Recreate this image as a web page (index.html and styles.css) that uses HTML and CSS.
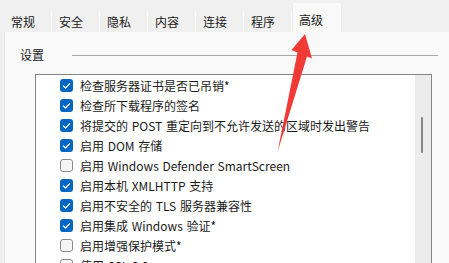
FILE: index.html
```html
<!DOCTYPE html>
<html lang="zh-CN">
<head>
<meta charset="utf-8">
<title>Internet 选项 - 高级</title>
<link rel="stylesheet" href="styles.css">
</head>
<body>
<div class="window">
  <div class="tabs">
    <div class="tab">常规</div>
    <div class="tab">安全</div>
    <div class="tab">隐私</div>
    <div class="tab">内容</div>
    <div class="tab">连接</div>
    <div class="tab">程序</div>
    <div class="tab selected">高级</div>
  </div>
  <div class="panel">
    <div class="group-head">
      <span class="group-label">设置</span>
      <span class="group-line"></span>
    </div>
    <div class="listbox">
      <ul class="items">
        <li class="item"><span class="cb on"><svg viewBox="0 0 13 13"><path d="M3.3 6.9 L5.5 9 L9.7 4.6"/></svg></span><span class="label">检查服务器证书是否已吊销*</span></li>
        <li class="item"><span class="cb on"><svg viewBox="0 0 13 13"><path d="M3.3 6.9 L5.5 9 L9.7 4.6"/></svg></span><span class="label">检查所下载程序的签名</span></li>
        <li class="item"><span class="cb on"><svg viewBox="0 0 13 13"><path d="M3.3 6.9 L5.5 9 L9.7 4.6"/></svg></span><span class="label">将提交的 POST 重定向到不允许发送的区域时发出警告</span></li>
        <li class="item"><span class="cb on"><svg viewBox="0 0 13 13"><path d="M3.3 6.9 L5.5 9 L9.7 4.6"/></svg></span><span class="label">启用 DOM 存储</span></li>
        <li class="item"><span class="cb off"></span><span class="label">启用 Windows Defender SmartScreen</span></li>
        <li class="item"><span class="cb on"><svg viewBox="0 0 13 13"><path d="M3.3 6.9 L5.5 9 L9.7 4.6"/></svg></span><span class="label">启用本机 XMLHTTP 支持</span></li>
        <li class="item"><span class="cb on"><svg viewBox="0 0 13 13"><path d="M3.3 6.9 L5.5 9 L9.7 4.6"/></svg></span><span class="label">启用不安全的 TLS 服务器兼容性</span></li>
        <li class="item"><span class="cb on"><svg viewBox="0 0 13 13"><path d="M3.3 6.9 L5.5 9 L9.7 4.6"/></svg></span><span class="label">启用集成 Windows 验证*</span></li>
        <li class="item"><span class="cb off"></span><span class="label">启用增强保护模式*</span></li>
        <li class="item"><span class="cb off"></span><span class="label">使用 SSL 3.0</span></li>
      </ul>
      <div class="scrollbar"><div class="thumb"></div></div>
    </div>
  </div>
  <svg class="arrow" viewBox="0 0 449 263" width="449" height="263">
    <polygon points="305,34 312,58.5 307,56.5 277.5,152 297.5,52.5 291.5,50"/>
  </svg>
</div>
</body>
</html>
```
FILE: styles.css
```css
html, body {
  margin: 0;
  padding: 0;
  height: 100%;
  overflow: hidden;
}
body {
  background: #f0f0f0;
  font-family: "Noto Sans CJK SC", "Noto Sans", sans-serif;
  font-size: 12px;
  color: #1a1a1a;
}
.window {
  position: relative;
  width: 449px;
  height: 263px;
  overflow: hidden;
}
.tabs {
  display: flex;
  align-items: flex-end;
  height: 32px;
  padding-left: 4px;
  box-sizing: border-box;
}
.tab {
  width: 48px;
  height: 21px;
  box-sizing: border-box;
  padding-left: 7px;
  line-height: 21px;
  background: #f0f0f0;
  border-right: 1px solid #fbfbfb;
  white-space: nowrap;
}
.tab.selected {
  width: 50px;
  height: 29px;
  padding-top: 6px;
  line-height: 22px;
  background: #f9f9f9;
  border-right: 1px solid #ececec;
  border-left: 1px solid #ececec;
  padding-left: 6px;
}
.panel {
  margin-left: 4px;
  height: 231px;
  background: #f9f9f9;
  border-left: 1px solid #e4e4e4;
}
.group-head {
  display: flex;
  align-items: center;
  height: 16px;
  padding-top: 15px;
  padding-left: 15px;
}
.group-label {
  line-height: 16px;
}
.group-line {
  flex: 1;
  height: 1px;
  background: #a9a9a9;
  margin-left: 28px;
  margin-right: 11px;
}
.listbox {
  display: flex;
  margin-top: 11px;
  margin-left: 30px;
  width: 397px;
  height: 210px;
  box-sizing: border-box;
  border: 1px solid #858585;
  background: #ffffff;
}
.items {
  flex: 1;
  list-style: none;
  margin: 0;
  padding: 0 0 0 24px;
}
.item {
  display: flex;
  align-items: center;
  height: 20px;
  gap: 7px;
  white-space: nowrap;
}
.label {
  word-spacing: 1px;
}
.cb {
  flex: none;
  width: 13px;
  height: 13px;
  box-sizing: border-box;
  border-radius: 3px;
  display: flex;
}
.cb.on {
  background: #0067c0;
}
.cb.on svg {
  width: 13px;
  height: 13px;
}
.cb.on path {
  fill: none;
  stroke: #ffffff;
  stroke-width: 1.2;
  stroke-linecap: round;
  stroke-linejoin: round;
}
.cb.off {
  background: #f5f5f5;
  border: 1px solid #8a8a8a;
}
.scrollbar {
  flex: none;
  width: 16px;
  background: #ececec;
}
.thumb {
  margin-top: 42px;
  margin-left: 6px;
  width: 2px;
  height: 36px;
  border-radius: 1px;
  background: #858585;
}
.arrow {
  position: absolute;
  left: 0;
  top: 0;
  pointer-events: none;
}
.arrow polygon {
  fill: #ef3a36;
}
```
